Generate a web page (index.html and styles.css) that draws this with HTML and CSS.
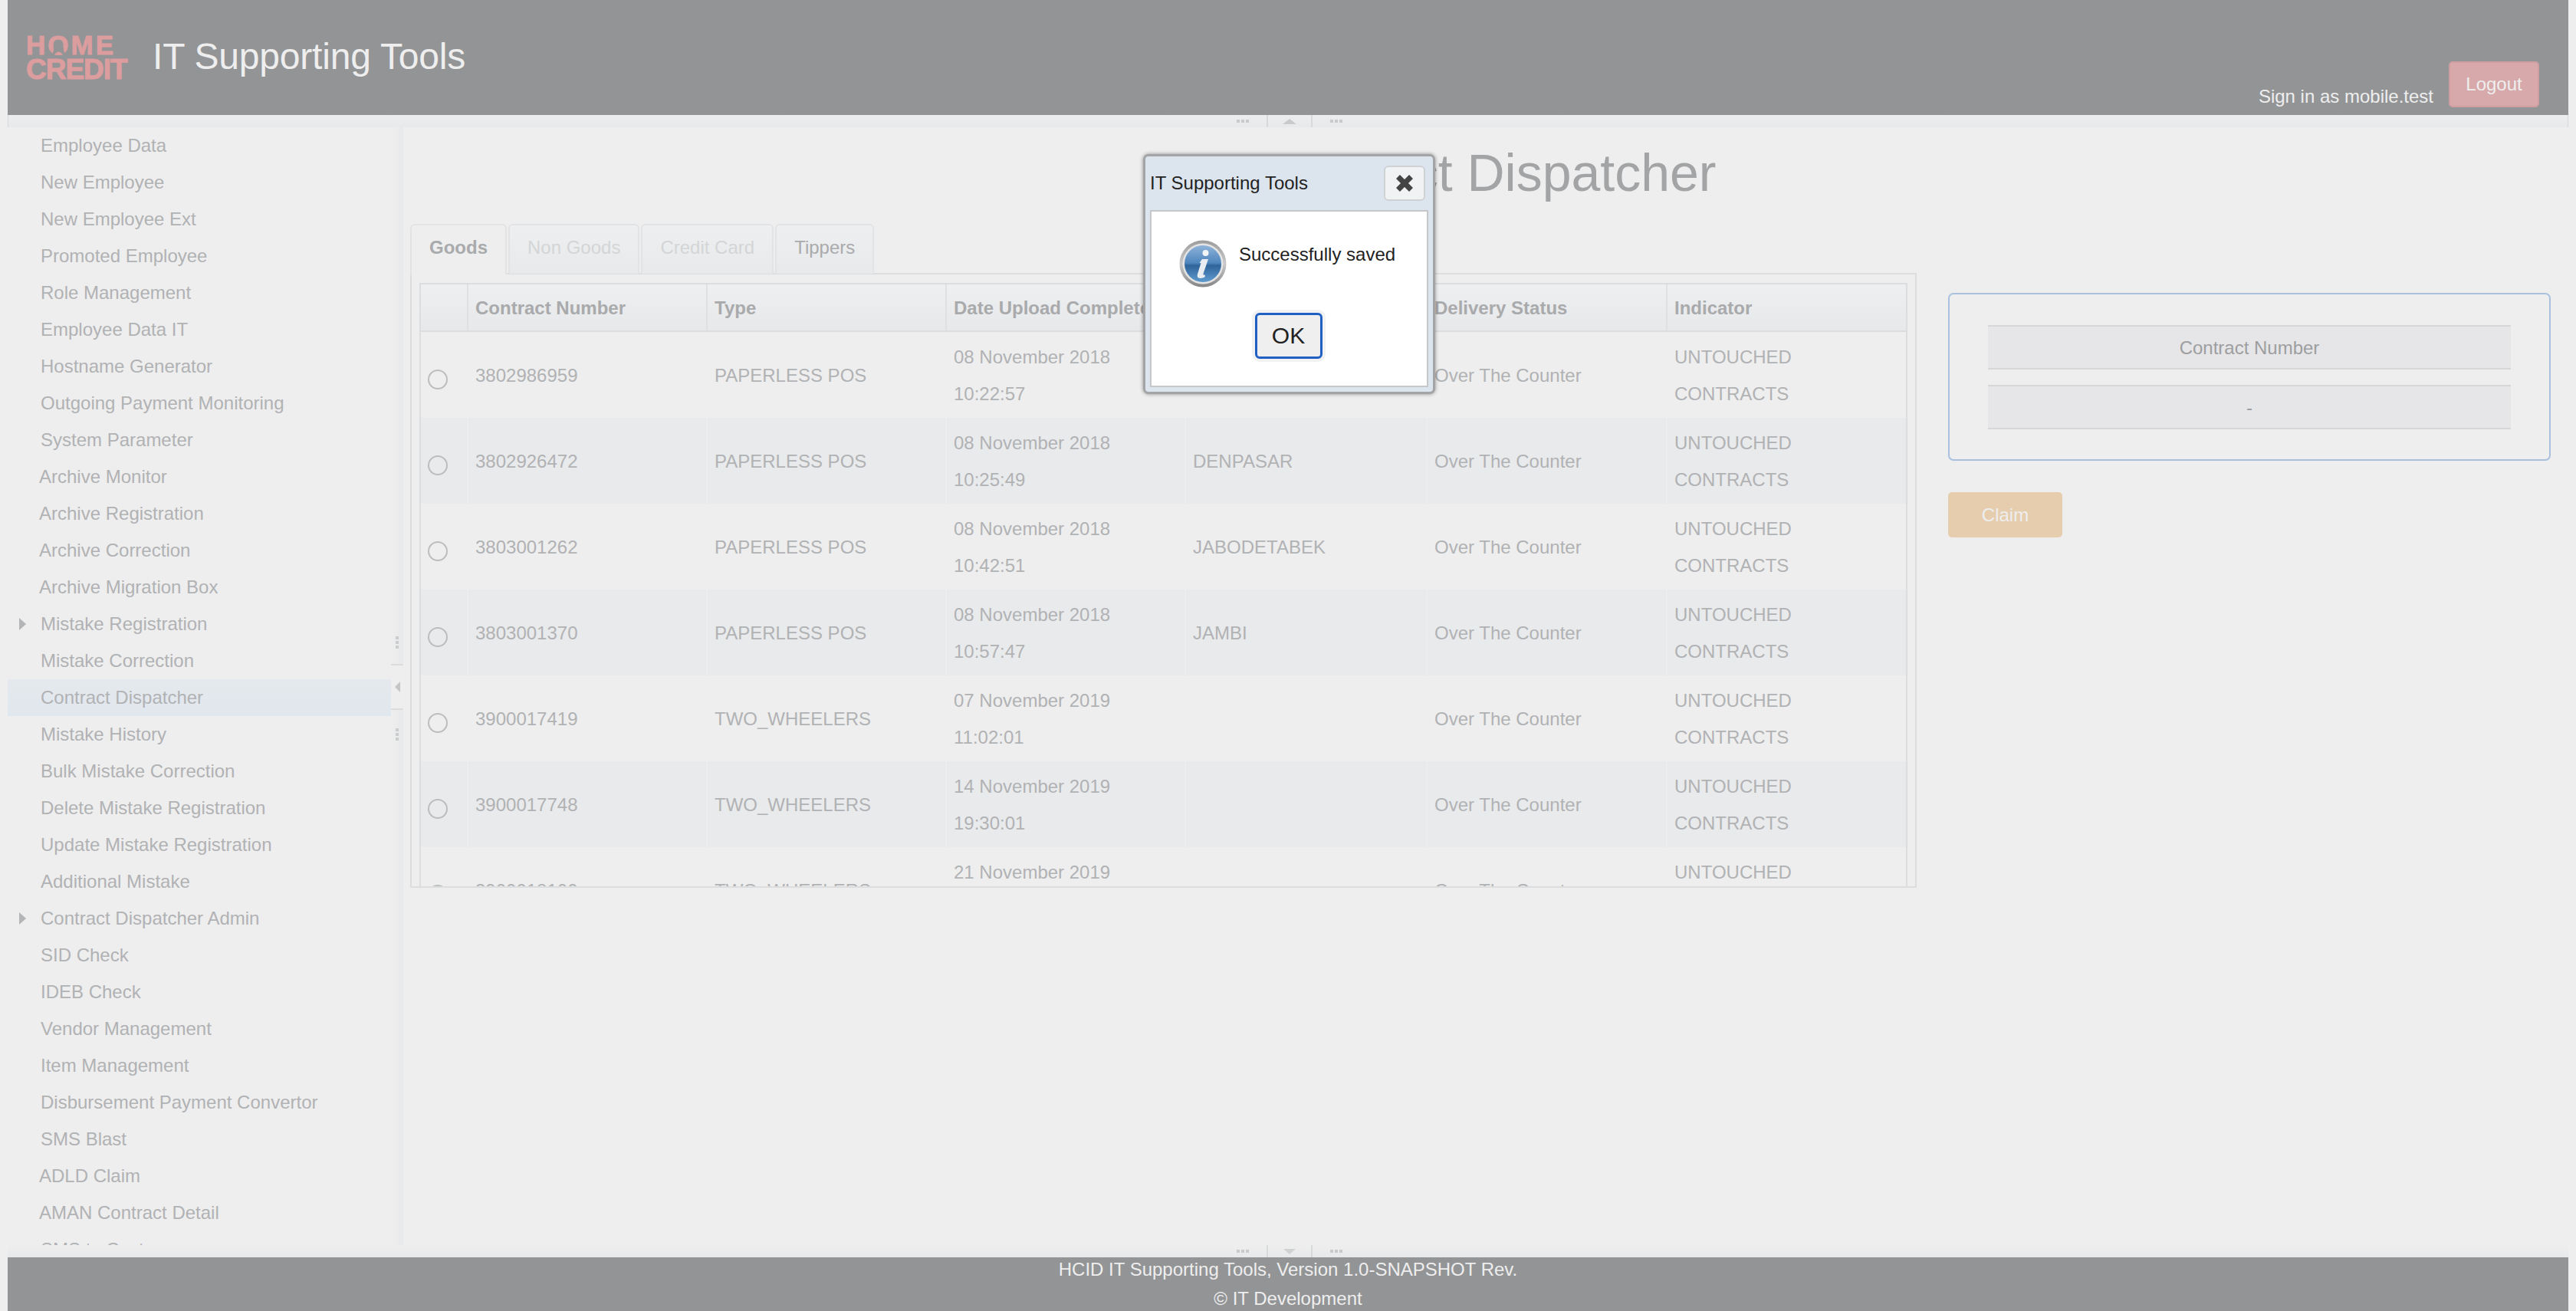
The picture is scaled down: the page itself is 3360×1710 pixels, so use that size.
FILE: index.html
```html
<!DOCTYPE html>
<html lang="en">
<head>
<meta charset="utf-8">
<title>IT Supporting Tools</title>
<link rel="stylesheet" href="styles.css">
</head>
<body>
<div class="app">
  <header class="header">
    <div class="logo">
      <div class="logo-home">H<span class="logo-o">O<svg class="logo-o-mark" viewBox="0 0 31 26"><rect x="9" y="15" width="13" height="11" fill="#939496"/><path d="M7.5 26 V24 A8 8 0 0 1 23.5 24 V26 Z" fill="#939496"/><path d="M10 24.5 Q15.5 16.5 21 24.5 Q15.5 25.5 10 24.5 Z" fill="#dc9d9f"/></svg></span>ME</div>
      <div class="logo-credit">CREDIT</div>
    </div>
    <div class="title">IT Supporting Tools</div>
    <div class="user">
      <span class="sign">Sign in as mobile.test</span>
      <button class="logout">Logout</button>
    </div>
  </header>
  <div class="bar">
    <div class="toggler"><i class="dots"></i><span class="sep"><i class="tri-up"></i></span><i class="dots"></i></div>
  </div>
  <main class="main">
    <nav class="side">
      <div class="side-list">
        <div class="item">Employee Data</div>
        <div class="item">New Employee</div>
        <div class="item">New Employee Ext</div>
        <div class="item">Promoted Employee</div>
        <div class="item">Role Management</div>
        <div class="item">Employee Data IT</div>
        <div class="item">Hostname Generator</div>
        <div class="item">Outgoing Payment Monitoring</div>
        <div class="item">System Parameter</div>
        <div class="item flush">Archive Monitor</div>
        <div class="item flush">Archive Registration</div>
        <div class="item flush">Archive Correction</div>
        <div class="item flush">Archive Migration Box</div>
        <div class="item parent">Mistake Registration</div>
        <div class="item">Mistake Correction</div>
        <div class="item current">Contract Dispatcher</div>
        <div class="item">Mistake History</div>
        <div class="item">Bulk Mistake Correction</div>
        <div class="item">Delete Mistake Registration</div>
        <div class="item">Update Mistake Registration</div>
        <div class="item">Additional Mistake</div>
        <div class="item parent">Contract Dispatcher Admin</div>
        <div class="item">SID Check</div>
        <div class="item">IDEB Check</div>
        <div class="item">Vendor Management</div>
        <div class="item">Item Management</div>
        <div class="item">Disbursement Payment Convertor</div>
        <div class="item">SMS Blast</div>
        <div class="item flush">ADLD Claim</div>
        <div class="item flush">AMAN Contract Detail</div>
        <div class="item">SMS to Customer</div>
      </div>
    </nav>
    <div class="west">
      <i class="dots-v"></i>
      <span class="west-toggle"><i class="tri-left"></i></span>
      <i class="dots-v"></i>
    </div>
    <section class="content">
      <h1 class="heading">Contract Dispatcher</h1>
      <div class="work">
        <div class="tabview">
          <ul class="tabs">
            <li class="tab active">Goods</li>
            <li class="tab disabled">Non Goods</li>
            <li class="tab disabled">Credit Card</li>
            <li class="tab">Tippers</li>
          </ul>
          <div class="panel">
            <div class="grid">
              <table class="table">
                <colgroup>
                  <col class="c-radio"><col class="c-a"><col class="c-a"><col class="c-a"><col class="c-b"><col class="c-c"><col class="c-d">
                </colgroup>
                <thead>
                  <tr><th></th><th>Contract Number</th><th>Type</th><th>Date Upload Completed</th><th>Branch</th><th>Delivery Status</th><th>Indicator</th></tr>
                </thead>
                <tbody>
                  <tr><td><i class="radio"></i></td><td>3802986959</td><td>PAPERLESS POS</td><td>08 November 2018<br>10:22:57</td><td>MEDAN</td><td>Over The Counter</td><td>UNTOUCHED<br>CONTRACTS</td></tr>
                  <tr><td><i class="radio"></i></td><td>3802926472</td><td>PAPERLESS POS</td><td>08 November 2018<br>10:25:49</td><td>DENPASAR</td><td>Over The Counter</td><td>UNTOUCHED<br>CONTRACTS</td></tr>
                  <tr><td><i class="radio"></i></td><td>3803001262</td><td>PAPERLESS POS</td><td>08 November 2018<br>10:42:51</td><td>JABODETABEK</td><td>Over The Counter</td><td>UNTOUCHED<br>CONTRACTS</td></tr>
                  <tr><td><i class="radio"></i></td><td>3803001370</td><td>PAPERLESS POS</td><td>08 November 2018<br>10:57:47</td><td>JAMBI</td><td>Over The Counter</td><td>UNTOUCHED<br>CONTRACTS</td></tr>
                  <tr><td><i class="radio"></i></td><td>3900017419</td><td>TWO_WHEELERS</td><td>07 November 2019<br>11:02:01</td><td></td><td>Over The Counter</td><td>UNTOUCHED<br>CONTRACTS</td></tr>
                  <tr><td><i class="radio"></i></td><td>3900017748</td><td>TWO_WHEELERS</td><td>14 November 2019<br>19:30:01</td><td></td><td>Over The Counter</td><td>UNTOUCHED<br>CONTRACTS</td></tr>
                  <tr><td><i class="radio"></i></td><td>3900018100</td><td>TWO_WHEELERS</td><td>21 November 2019<br>10:00:01</td><td></td><td>Over The Counter</td><td>UNTOUCHED<br>CONTRACTS</td></tr>
                </tbody>
              </table>
            </div>
          </div>
        </div>
        <aside class="claim-col">
          <div class="claim-box">
            <div class="field">Contract Number</div>
            <div class="field">-</div>
          </div>
          <button class="claim">Claim</button>
        </aside>
      </div>
    </section>
  </main>
  <div class="bar bar-bottom">
    <div class="toggler"><i class="dots"></i><span class="sep"><i class="tri-down"></i></span><i class="dots"></i></div>
  </div>
  <footer class="footer">
    <div>HCID IT Supporting Tools, Version 1.0-SNAPSHOT Rev.</div>
    <div>© IT Development</div>
  </footer>
</div>

<div class="dialog">
  <div class="dialog-title">
    <span>IT Supporting Tools</span>
    <button class="close" aria-label="Close">
      <svg class="close-x" viewBox="0 0 24 24"><path d="M3.5 3.5 L20.500 20.500 M20.500 3.5 L3.500 20.500" stroke="#444" stroke-width="7" fill="none"/></svg>
    </button>
  </div>
  <div class="dialog-body">
    <div class="message">
      <svg class="info" viewBox="0 0 62 62">
        <defs>
          <linearGradient id="ring" x1="0" y1="0" x2="0" y2="1"><stop offset="0" stop-color="#9c9c9c"/><stop offset=".5" stop-color="#c9c9c9"/><stop offset="1" stop-color="#858585"/></linearGradient>
          <linearGradient id="ball" x1="0" y1="0" x2="0" y2="1"><stop offset="0" stop-color="#8fb3d9"/><stop offset=".48" stop-color="#4f86bd"/><stop offset=".55" stop-color="#2f6499"/><stop offset="1" stop-color="#5f9bcf"/></linearGradient>
        </defs>
        <circle cx="31" cy="31" r="30.500" fill="url(#ring)"/>
        <circle cx="31" cy="31" r="26.500" fill="#e4e4e4"/>
        <circle cx="31" cy="31" r="24" fill="url(#ball)"/>
        <circle cx="34.500" cy="17" r="4" fill="#f2f5f8"/>
        <path d="M30 25 H38 L31.500 44 Q31 46.500 34 45.500 L33.500 48.500 Q28 51 24.500 49 Q23 47.500 24 44.500 L28.500 30 H26.500 Z" fill="#e9edf1"/>
      </svg>
      <span class="message-text">Successfully saved</span>
    </div>
    <button class="ok">OK</button>
  </div>
</div>
</body>
</html>
```

FILE: styles.css
```css
* { box-sizing: border-box; }
html, body { margin: 0; padding: 0; height: 100%; }
body {
  background: #eeeeee;
  font-family: "Liberation Sans", Arial, sans-serif;
  font-size: 24px;
  color: #b1b2b4;
  overflow: hidden;
  position: relative;
}
i { display: block; font-style: normal; }

.app {
  height: 1710px;
  padding: 0 10px;
  display: flex;
  flex-direction: column;
}

/* Header */
.header {
  flex: 0 0 150px;
  background: #939496;
  display: flex;
  padding-left: 24px;
}
.logo {
  width: 142px;
  margin-top: 45px;
  font-weight: 700;
  color: #dc9d9f;
  -webkit-text-stroke: 1px #dc9d9f;
}
.logo-home { font-size: 35px; line-height: 28px; letter-spacing: 3px; white-space: nowrap; }
.logo-credit { font-size: 37px; line-height: 32px; letter-spacing: -1px; margin-top: 2px; white-space: nowrap; }
.logo-o { position: relative; display: inline-block; }
.logo-o-mark { position: absolute; left: -1px; top: 2px; width: 31px; height: 26px; }
.title {
  margin-left: 23px;
  align-self: center;
  margin-bottom: 2px;
  font-size: 48px;
  line-height: 56px;
  letter-spacing: -0.2px;
  color: #eeeeee;
  white-space: nowrap;
}
.user {
  margin-left: auto;
  margin-right: 38px;
  margin-bottom: 10px;
  align-self: flex-end;
  display: flex;
  align-items: flex-end;
  gap: 20px;
}
.sign { color: #eeeeee; line-height: 38px; margin-bottom: -5px; white-space: nowrap; }
.logout {
  width: 118px;
  height: 60px;
  border: 2px solid #cf9ea0;
  border-radius: 5px;
  background: #d7a9aa;
  color: #eeeeee;
  font: inherit;
  padding: 0;
}

/* Resizer bars */
.bar {
  flex: 0 0 16px;
  background: linear-gradient(#eceded, #e8e9eb);
  display: flex;
  justify-content: center;
  border-left: 1px solid #d6d7d9;
  border-right: 1px solid #d6d7d9;
}
.bar-bottom { background: linear-gradient(#eeeeee, #e8e9eb); border-color: transparent; }
.toggler { display: flex; align-items: center; gap: 23px; margin-left: 4px; }
.dots {
  width: 16px;
  height: 4px;
  background: repeating-linear-gradient(90deg, #c9cacb 0 4px, transparent 4px 6px);
}
.sep {
  align-self: stretch;
  width: 60px;
  border-left: 2px solid #d8d9db;
  border-right: 2px solid #d8d9db;
  display: flex;
  align-items: center;
  justify-content: center;
}
.tri-up { width: 0; height: 0; border-left: 9px solid transparent; border-right: 9px solid transparent; border-bottom: 7px solid #c9cacb; }
.tri-down { width: 0; height: 0; border-left: 8px solid transparent; border-right: 8px solid transparent; border-top: 7px solid #d0d1d2; }

/* Main */
.main { flex: 1; min-height: 0; display: flex; }
.side { flex: 0 0 500px; overflow: hidden; }
.item {
  height: 48px;
  line-height: 48px;
  padding-left: 43px;
  display: flex;
  align-items: center;
  white-space: nowrap;
}
.item.flush { padding-left: 41px; }
.item.parent { padding-left: 15px; }
.item.parent::before {
  content: "";
  width: 0;
  height: 0;
  margin-right: 19px;
  border-left: 9px solid #b4b5b7;
  border-top: 8px solid transparent;
  border-bottom: 8px solid transparent;
}
.item.current { background: linear-gradient(#e5e9ed, #e0e7ee); }

.west {
  flex: 0 0 16px;
  background: linear-gradient(90deg, #eeeeee, #e8e9eb);
  display: flex;
  flex-direction: column;
  align-items: center;
  padding-top: 664px;
}
.dots-v {
  width: 4px;
  height: 16px;
  background: repeating-linear-gradient(180deg, #cbcccd 0 4px, transparent 4px 6px);
}
.west-toggle {
  width: 16px;
  height: 60px;
  margin: 20px 0 24px;
  border-top: 2px solid #dcdddf;
  border-bottom: 2px solid #dcdddf;
  background: #eeeeee;
  display: flex;
  align-items: center;
  justify-content: center;
}
.tri-left { width: 0; height: 0; border-right: 7px solid #c4c5c6; border-top: 7px solid transparent; border-bottom: 7px solid transparent; }

.content { flex: 1; min-width: 0; padding: 19px 0 0 9px; }
.heading {
  margin: 0 0 27px -9px;
  font-size: 68px;
  line-height: 80px;
  font-weight: 400;
  color: #a3a4a6;
  text-align: center;
  white-space: nowrap;
}
.work { display: flex; align-items: flex-start; }

/* Tabs */
.tabview { flex: 0 0 1964px; height: 866px; display: flex; flex-direction: column; }
.tabs {
  list-style: none;
  margin: 0 0 -2px;
  padding: 0;
  display: flex;
  gap: 2px;
  height: 66px;
  position: relative;
  z-index: 1;
}
.tab {
  height: 65px;
  padding: 0 23px;
  border: 2px solid #e2e3e5;
  border-bottom: 0;
  border-radius: 6px 6px 0 0;
  background: linear-gradient(#eeeff0, #e8e9eb);
  line-height: 58px;
  color: #a9aaac;
  white-space: nowrap;
}
.tab.active { height: 66px; background: #eeeeee; font-weight: 700; }
.tab.disabled { color: #d4d5d6; }
.panel {
  flex: 1;
  min-height: 0;
  border: 2px solid #dcdddf;
  padding: 11px 10px 0;
  display: flex;
}
.grid {
  flex: 1;
  min-width: 0;
  border: 2px solid #dcdddf;
  border-bottom: 0;
  overflow: hidden;
}

/* Table */
.table { width: 1937px; table-layout: fixed; border-collapse: separate; border-spacing: 0; }
.c-radio { width: 60px; }
.c-a { width: 312px; }
.c-b { width: 315px; }
.c-c { width: 313px; }
.c-d { width: 313px; }
.table th {
  height: 62px;
  padding: 2px 8px 0 9px;
  text-align: left;
  font-weight: 700;
  color: #a9aaac;
  background: linear-gradient(#eeeff0, #e7e8ea);
  border-left: 2px solid #dfe0e2;
  border-bottom: 2px solid #dcdddf;
  white-space: nowrap;
  overflow: hidden;
}
.table th:first-child { border-left: 0; }
.table td {
  height: 112px;
  padding: 9px 8px 7px 9px;
  line-height: 48px;
  border-left: 2px solid transparent;
  white-space: nowrap;
  vertical-align: middle;
}
.table td:first-child { border-left: 0; padding: 0 0 0 9px; }
.table tbody tr:nth-child(even) td { background: #e9eaec; border-left-color: #eceded; }
.table tbody tr td:first-child { border-left: 0; }
.radio {
  width: 26px;
  height: 26px;
  margin-top: 12px;
  border: 2px solid #bcbdbe;
  border-radius: 50%;
}

/* Claim column */
.claim-col { flex: 0 0 786px; margin: 90px 0 0 41px; }
.claim-box {
  height: 219px;
  padding: 40px 50px;
  border: 2px solid #a9c1de;
  border-radius: 7px;
  display: flex;
  flex-direction: column;
  gap: 20px;
}
.field {
  height: 58px;
  line-height: 56px;
  background: #e6e6e8;
  border-top: 2px solid #d5d6d8;
  border-bottom: 2px solid #d5d6d8;
  text-align: center;
  color: #9d9e9f;
}
.claim {
  display: block;
  margin-top: 41px;
  width: 149px;
  height: 59px;
  border: 0;
  border-radius: 5px;
  background: #e5cdae;
  color: #eeeeee;
  font: inherit;
}

/* Footer */
.footer {
  flex: 0 0 70px;
  background: #939496;
  color: #eeeeee;
  line-height: 38px;
  text-align: center;
  display: flex;
  flex-direction: column;
  justify-content: center;
  overflow: hidden;
}

/* Dialog */
.dialog {
  position: absolute;
  left: 1491px;
  top: 201px;
  width: 381px;
  height: 313px;
  border: 3px solid #a3a4a5;
  border-radius: 7px;
  background: #dce5ee;
  box-shadow: 0 0 5px rgba(0, 0, 0, .4);
  padding: 0 6px 6px;
  display: flex;
  flex-direction: column;
  color: #222222;
}
.dialog-title {
  height: 70px;
  flex: none;
  display: flex;
  align-items: center;
  justify-content: space-between;
}
.close {
  width: 54px;
  height: 46px;
  margin-right: 4px;
  padding: 0;
  border: 2px solid #cfd2d5;
  border-radius: 6px;
  background: #f1f2f3;
  display: flex;
  align-items: center;
  justify-content: center;
}
.close-x { width: 24px; height: 24px; }
.dialog-body {
  flex: 1;
  background: #ffffff;
  border: 2px solid #c6c7c8;
  padding: 37px 0 0 36px;
  display: flex;
  flex-direction: column;
}
.message { display: flex; align-items: flex-start; gap: 16px; }
.info { width: 62px; height: 62px; flex: none; }
.message-text { line-height: 38px; white-space: nowrap; }
.ok {
  align-self: center;
  margin: 33px 0 0 -38px;
  width: 88px;
  height: 60px;
  border: 3px solid #2060c4;
  border-radius: 6px;
  background: #efefef;
  box-shadow: 0 0 0 4px #f2f2f2;
  color: #222222;
  font: 30px "Liberation Sans", Arial, sans-serif;
  padding: 0;
}
```
